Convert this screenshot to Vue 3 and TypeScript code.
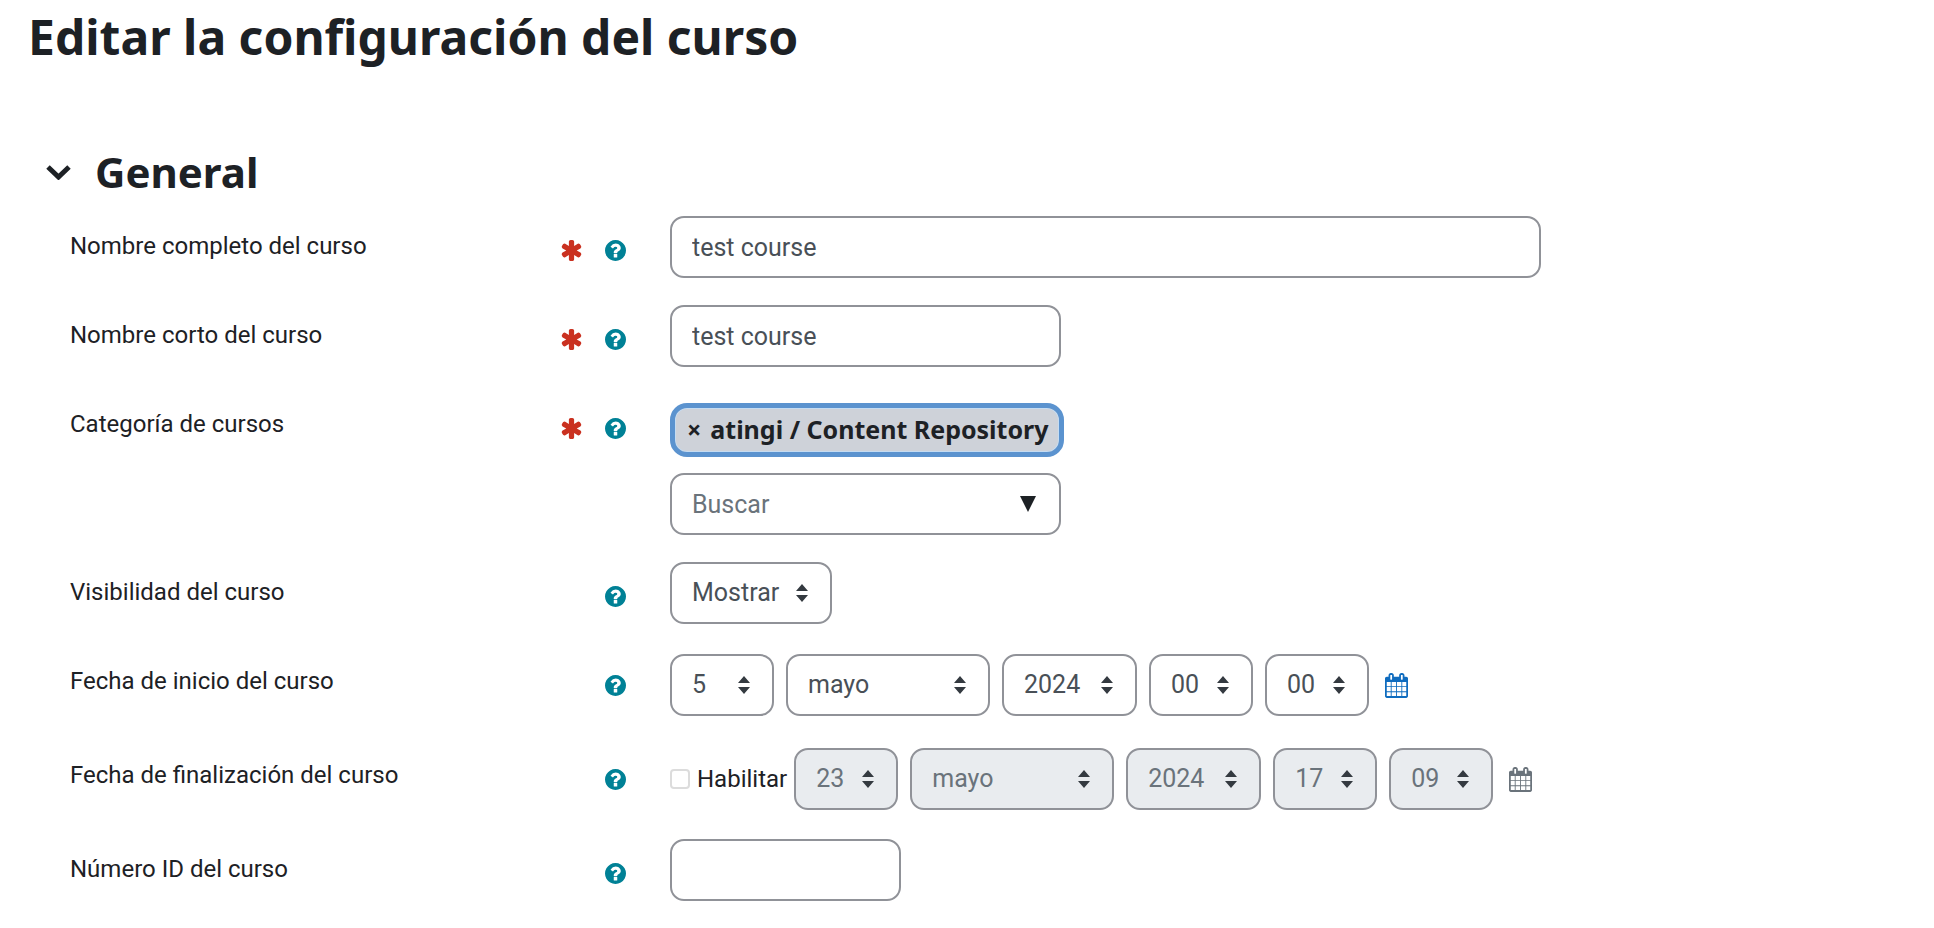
<script setup lang="ts">
import { reactive, ref } from 'vue'

interface DatePart {
  name: string
  value: string
  size: 'short' | 'long' | 'year'
  options: string[]
}

const months = ['enero', 'febrero', 'marzo', 'abril', 'mayo', 'junio', 'julio', 'agosto', 'septiembre', 'octubre', 'noviembre', 'diciembre']
const years = ['2022', '2023', '2024', '2025', '2026']
const range = (from: number, to: number, pad = 0) =>
  Array.from({ length: to - from + 1 }, (_, i) => String(from + i).padStart(pad, '0'))

const dateParts = (day: string, month: string, year: string, hour: string, minute: string): DatePart[] => [
  { name: 'Día', value: day, size: 'short', options: range(1, 31) },
  { name: 'Mes', value: month, size: 'long', options: months },
  { name: 'Año', value: year, size: 'year', options: years },
  { name: 'Hora', value: hour, size: 'short', options: range(0, 23, 2) },
  { name: 'Minuto', value: minute, size: 'short', options: range(0, 59, 2) },
]

const fullName = ref('test course')
const shortName = ref('test course')
const search = ref('')
const visibility = ref('Mostrar')
const idNumber = ref('')
const endEnabled = ref(false)
const open = ref(true)
const startDate = reactive(dateParts('5', 'mayo', '2024', '00', '00'))
const endDate = reactive(dateParts('23', 'mayo', '2024', '17', '09'))

const rows = [
  { id: 'fullname', label: 'Nombre completo del curso', required: true },
  { id: 'shortname', label: 'Nombre corto del curso', required: true },
  { id: 'category', label: 'Categoría de cursos', required: true },
  { id: 'visible', label: 'Visibilidad del curso', required: false },
  { id: 'start', label: 'Fecha de inicio del curso', required: false },
  { id: 'end', label: 'Fecha de finalización del curso', required: false },
  { id: 'idnumber', label: 'Número ID del curso', required: false },
]

const asteriskPath =
  'M1546 1050q46 26 59.5 77.5t-12.5 97.5l-64 110q-26 46-77.5 59.5t-97.5-12.5l-266-153v307q0 52-38 90t-90 38h-128q-52 0-90-38t-38-90v-307l-266 153q-46 26-97.5 12.5t-77.5-59.5l-64-110q-26-46-12.5-97.5t59.5-77.5l266-154-266-154q-46-26-59.5-77.5t12.5-97.5l64-110q26-46 77.5-59.5t97.5 12.5l266 153v-307q0-52 38-90t90-38h128q52 0 90 38t38 90v307l266-153q46-26 97.5-12.5t77.5 59.5l64 110q26 46 12.5 97.5t-59.5 77.5l-266 154z'
const helpPath =
  'M1024 1376v-192q0-14-9-23t-23-9h-192q-14 0-23 9t-9 23v192q0 14 9 23t23 9h192q14 0 23-9t9-23zm256-672q0-88-55.5-163t-138.5-116-170-41q-243 0-371 213-15 24 8 42l132 100q7 6 19 6 16 0 25-12 53-68 86-92 34-24 86-24 48 0 85.5 26t37.5 59q0 38-20 61t-68 45q-63 28-115.5 86.5t-52.5 125.5v36q0 14 9 23t23 9h192q14 0 23-9t9-23q0-19 21.5-49.5t54.5-49.5q32-18 49-28.5t46-35 44.5-48 28-60.5 12.5-81zm384 192q0 209-103 385.5t-279.5 279.5-385.5 103-385.5-103-279.5-279.5-103-385.5 103-385.5 279.5-279.5 385.5-103 385.5 103 279.5 279.5 103 385.5z'
const calendarPath =
  'M192 1664h288v-288h-288v288zm352 0h320v-288h-320v288zm-352-352h288v-320h-288v320zm352 0h320v-320h-320v320zm-352-384h288v-288h-288v288zm736 736h320v-288h-320v288zm-384-736h320v-288h-320v288zm768 736h288v-288h-288v288zm-384-352h320v-320h-320v320zm-352-864v-288q0-13-9.5-22.5t-22.5-9.5h-64q-13 0-22.5 9.5t-9.5 22.5v288q0 13 9.5 22.5t22.5 9.5h64q13 0 22.5-9.5t9.5-22.5zm736 864h288v-320h-288v320zm-384-384h320v-288h-320v288zm384 0h288v-288h-288v288zm32-480v-288q0-13-9.5-22.5t-22.5-9.5h-64q-13 0-22.5 9.5t-9.5 22.5v288q0 13 9.5 22.5t22.5 9.5h64q13 0 22.5-9.5t9.5-22.5zm384-64v1280q0 52-38 90t-90 38h-1408q-52 0-90-38t-38-90v-1280q0-52 38-90t90-38h128v-96q0-66 47-113t113-47h64q66 0 113 47t47 113v96h384v-96q0-66 47-113t113-47h64q66 0 113 47t47 113v96h128q52 0 90 38t38 90z'
</script>

<template>
  <main class="page">
    <h1 class="title">Editar la configuración del curso</h1>
    <form @submit.prevent>
      <h2 class="section">
        <button class="toggle" type="button" :aria-expanded="open" @click="open = !open">
          <svg class="chevron" viewBox="0 0 25 16" aria-hidden="true">
            <path d="M2 3l10.500 10 10.500-10" />
          </svg>
          <span>General</span>
        </button>
      </h2>

      <div v-if="open" class="rows">
        <div v-for="row in rows" :key="row.id" class="row">
          <div class="head">
            <label :for="row.id">{{ row.label }}</label>
            <div class="marks">
              <svg v-if="row.required" class="required" viewBox="128 128 1536 1536" role="img" aria-label="Obligatorio">
                <path :d="asteriskPath" />
              </svg>
              <button class="help" type="button" :aria-label="`Ayuda con ${row.label}`">
                <svg viewBox="128 128 1536 1536" aria-hidden="true"><path :d="helpPath" /></svg>
              </button>
            </div>
          </div>

          <div v-if="row.id === 'fullname'" class="field">
            <input id="fullname" v-model="fullName" class="control full" type="text" />
          </div>

          <div v-else-if="row.id === 'shortname'" class="field">
            <input id="shortname" v-model="shortName" class="control medium" type="text" />
          </div>

          <div v-else-if="row.id === 'category'" class="field category">
            <button class="tag" type="button"><span aria-hidden="true">×</span><span>atingi / Content Repository</span></button>
            <div class="combo medium">
              <input id="category" v-model="search" class="control" type="text" placeholder="Buscar" />
              <svg class="caret" viewBox="0 0 16 16" aria-hidden="true"><path d="M0 0h16L8 16z" /></svg>
            </div>
          </div>

          <div v-else-if="row.id === 'visible'" class="field">
            <div class="picker">
              <select id="visible" v-model="visibility" class="control">
                <option>Mostrar</option>
                <option>Ocultar</option>
              </select>
              <svg class="arrows" viewBox="0 0 12 18" aria-hidden="true"><path d="M6 0l6 7H0zM6 18l-6-7h12z" /></svg>
            </div>
          </div>

          <div v-else-if="row.id === 'start'" class="field date">
            <div v-for="(part, i) in startDate" :key="part.name" class="picker" :class="part.size">
              <select :id="i === 0 ? 'start' : undefined" v-model="part.value" class="control" :aria-label="part.name">
                <option v-for="o in part.options" :key="o">{{ o }}</option>
              </select>
              <svg class="arrows" viewBox="0 0 12 18" aria-hidden="true"><path d="M6 0l6 7H0zM6 18l-6-7h12z" /></svg>
            </div>
            <button class="calendar" type="button" aria-label="Calendario">
              <svg viewBox="64 0 1664 1792" aria-hidden="true"><path :d="calendarPath" /></svg>
            </button>
          </div>

          <div v-else-if="row.id === 'end'" class="field date">
            <label class="enable"><input id="end" v-model="endEnabled" type="checkbox" />Habilitar</label>
            <div v-for="part in endDate" :key="part.name" class="picker" :class="part.size">
              <select v-model="part.value" class="control" :disabled="!endEnabled" :aria-label="part.name">
                <option v-for="o in part.options" :key="o">{{ o }}</option>
              </select>
              <svg class="arrows" viewBox="0 0 12 18" aria-hidden="true"><path d="M6 0l6 7H0zM6 18l-6-7h12z" /></svg>
            </div>
            <button class="calendar" type="button" aria-label="Calendario" :disabled="!endEnabled">
              <svg viewBox="64 0 1664 1792" aria-hidden="true"><path :d="calendarPath" /></svg>
            </button>
          </div>

          <div v-else class="field">
            <input id="idnumber" v-model="idNumber" class="control small" type="text" />
          </div>
        </div>
      </div>
    </form>
  </main>
</template>

<style>
body {
  margin: 0;
  background: #fff;
}
</style>

<style scoped>
.page {
  padding: 5px 64px 26px 28px;
  color: #1d2125;
  font-family: Roboto, "Liberation Sans", sans-serif;
  font-size: 24px;
  line-height: 36px;
}

.title,
.section {
  margin: 0;
  font-family: "Noto Sans", "Open Sans", sans-serif;
  font-weight: 700;
}

.title {
  margin-bottom: 75px;
  font-size: 48px;
  line-height: 64px;
}

.section {
  margin: 0 0 16px 18px;
  font-size: 42px;
  line-height: 56px;
}

button {
  padding: 0;
  border: 0;
  background: none;
  color: inherit;
  font: inherit;
  cursor: pointer;
}

svg {
  display: block;
  fill: currentColor;
}

.toggle {
  display: flex;
  align-items: center;
  gap: 24px;
}

.chevron {
  width: 25px;
  height: 16px;
  fill: none;
  stroke: currentColor;
  stroke-width: 5;
}

.rows {
  display: grid;
  gap: 27px;
  padding-left: 42px;
}

.row {
  display: grid;
  grid-template-columns: 1fr 2fr;
  align-items: start;
}

.head {
  display: flex;
  justify-content: space-between;
  padding: 12px 44px 0 0;
}

.marks {
  display: flex;
  gap: 23px;
  padding-top: 12px;
}

.required,
.help,
.help svg {
  width: 21px;
  height: 21px;
}

.required {
  color: #ca3120;
}

.help {
  color: #008196;
}

.control {
  box-sizing: border-box;
  width: 100%;
  height: 62px;
  margin: 0;
  padding: 0 20px;
  border: 2px solid #909298;
  border-radius: 14px;
  background: #fff;
  color: #495057;
  font: inherit;
  font-size: 25px;
  appearance: none;
}

.control::placeholder {
  color: #6a737b;
  opacity: 1;
}

.control:disabled {
  background: #e9ecef;
  color: #6a737b;
  opacity: 1;
}

.field {
  display: flex;
}

.full {
  max-width: 871px;
}

.medium {
  width: 391px;
}

.small {
  width: 231px;
}

.category {
  flex-direction: column;
  align-items: flex-start;
  gap: 16px;
  padding-top: 9px;
}

.tag {
  display: flex;
  align-items: center;
  gap: 9px;
  height: 54px;
  padding: 0 10px 2px 12px;
  border: 5px solid #5b93cf;
  border-radius: 17px;
  background: #ced2d9;
  box-shadow: inset 0 0 0 1px #c5dcf2;
  font-family: "Noto Sans", "Open Sans", sans-serif;
  font-size: 25px;
  font-weight: 700;
}

.combo,
.picker {
  display: grid;
  align-items: center;
}

.combo > *,
.picker > * {
  grid-area: 1 / 1;
}

.caret,
.arrows {
  justify-self: end;
  pointer-events: none;
}

.caret {
  width: 16px;
  height: 16px;
  margin-right: 25px;
}

.arrows {
  width: 12px;
  height: 18px;
  margin-right: 24px;
  color: #343a40;
}

.picker .control {
  padding-right: 50px;
}

.date {
  align-items: center;
  gap: 12px;
  padding: 3px 0 2px;
}

.short {
  width: 104px;
}

.long {
  width: 204px;
}

.year {
  width: 135px;
}

.picker.short .control,
.picker.year .control {
  padding-right: 40px;
}

.enable {
  display: flex;
  align-items: center;
  gap: 7px;
  margin-right: -5px;
}

.enable input {
  box-sizing: border-box;
  width: 20px;
  height: 20px;
  margin: 0;
  border: 2px solid #dcdcdc;
  border-radius: 4px;
  background: #fff;
  appearance: none;
}

.enable input:checked {
  background: #0f6cbf;
}

.calendar {
  margin-left: 4px;
  color: #0f6cbf;
}

.calendar:disabled {
  color: #6a737b;
}

.calendar svg {
  width: 23px;
  height: 25px;
}
</style>
